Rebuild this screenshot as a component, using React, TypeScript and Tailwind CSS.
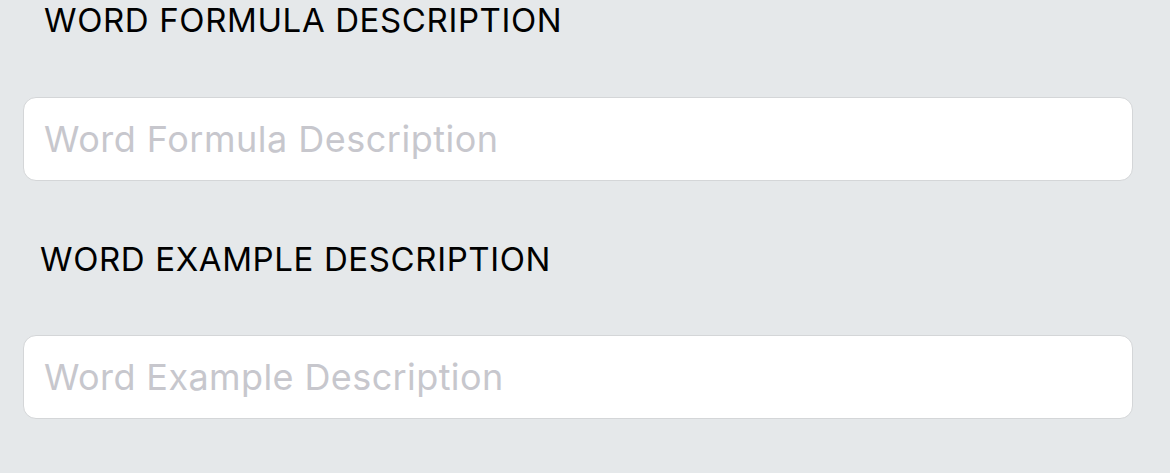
import React from "react";

export default function App() {
  return (
    <div
      className="w-[1170px] h-[473px] bg-[#e5e8ea] overflow-hidden"
      style={{ fontFamily: "Inter, 'Noto Sans', sans-serif" }}
    >
      <div className="pl-[44px] h-[40px] text-[33px] leading-[40px] text-black font-[430] tracking-[0.62px]">
        WORD FORMULA DESCRIPTION
      </div>
      <div className="mt-[57px] ml-[23px] w-[1110px] h-[84px] bg-white rounded-[13px] border border-[#d4d6d8] flex items-center pl-[20px]">
        <span className="text-[36px] leading-[44px] text-[#c7c7cd] tracking-[0.5px]">Word Formula Description</span>
      </div>
      <div className="mt-[58px] pl-[40px] h-[40px] text-[33px] leading-[40px] text-black font-[430] tracking-[0.62px]">
        WORD EXAMPLE DESCRIPTION
      </div>
      <div className="mt-[56px] ml-[23px] w-[1110px] h-[84px] bg-white rounded-[13px] border border-[#d4d6d8] flex items-center pl-[20px]">
        <span className="text-[36px] leading-[44px] text-[#c7c7cd] tracking-[0.4px]">Word Example Description</span>
      </div>
    </div>
  );
}
